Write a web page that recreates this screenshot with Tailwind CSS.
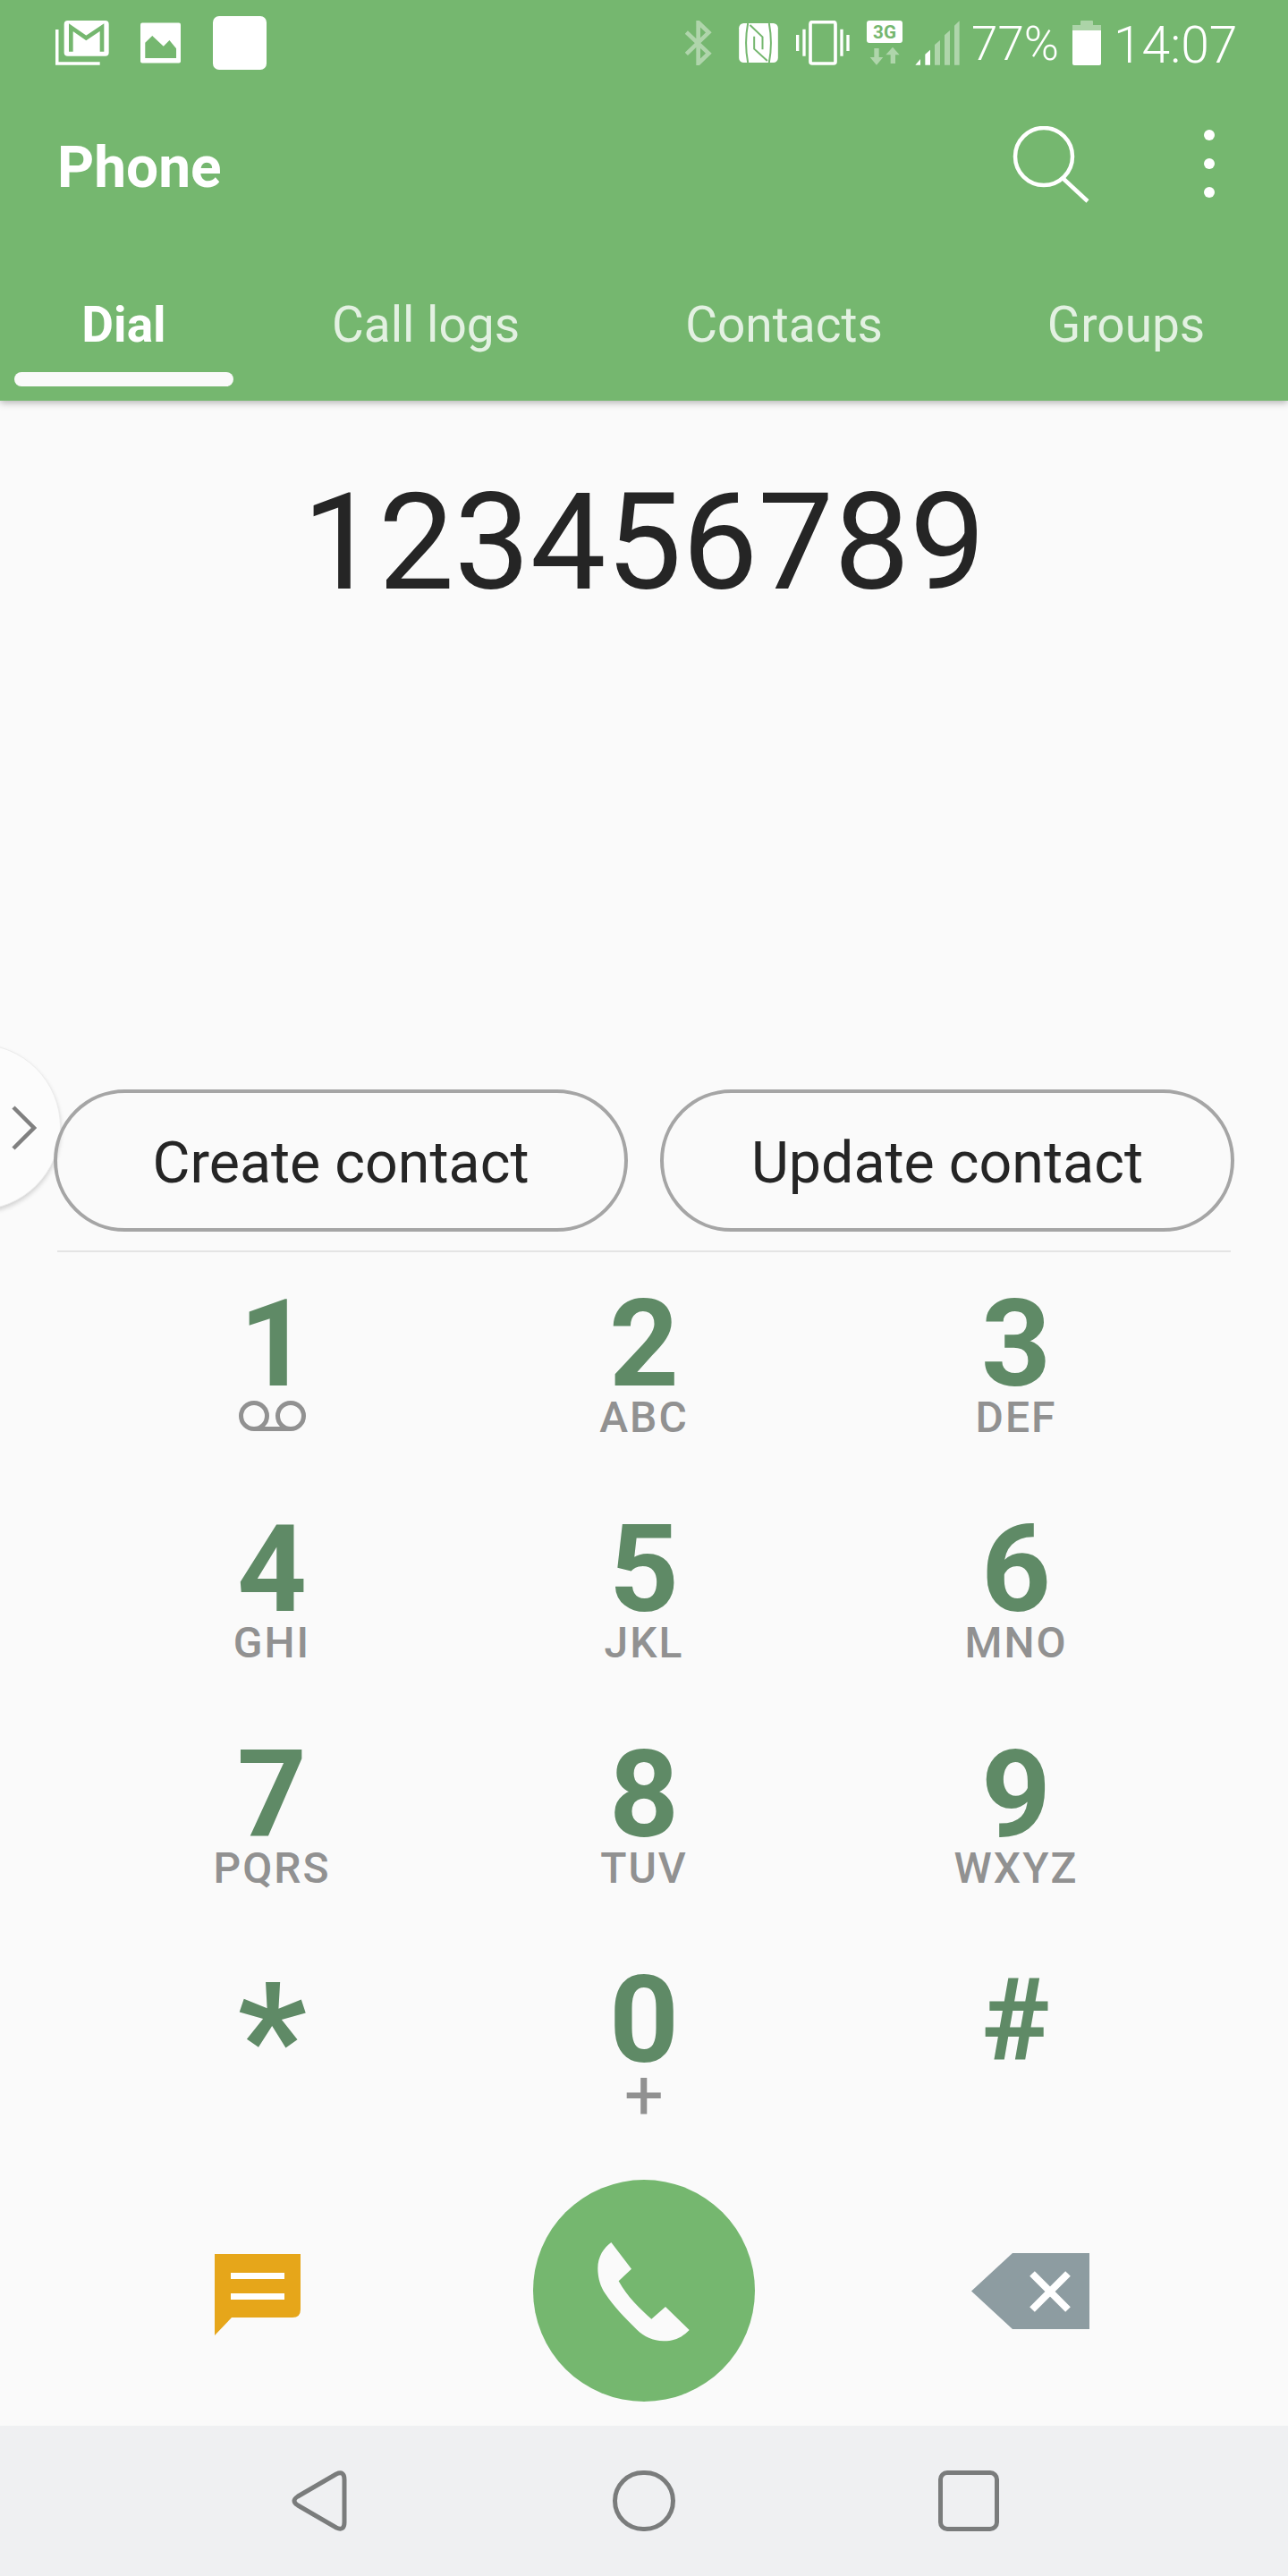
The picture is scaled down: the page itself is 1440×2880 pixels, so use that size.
<!DOCTYPE html>
<html lang="en">
<head>
    <meta charset="UTF-8">
    <title>Phone</title>
    <script src="https://cdn.jsdelivr.net/npm/@tailwindcss/browser@4"></script>
</head>
<body class="bg-[#fafafa] font-['Roboto',sans-serif]">
<div class="relative w-[1440px] h-[2880px] overflow-hidden flex flex-col bg-[#fafafa]">

    <!-- header -->
    <header class="relative z-10 h-[448px] shrink-0 bg-[#75b76f] text-white shadow-[0_2px_8px_rgba(0,0,0,0.3)]">
        <!-- status bar -->
        <div class="h-[96px] flex items-start pl-[62px]">
            <svg class="mt-[23px] w-[60px] h-[50px]" viewBox="37 39 180 150">
                <path d="M42 69V183H186" fill="none" stroke="#fff" stroke-width="11"/>
                <rect x="66" y="39" width="150" height="119" rx="12" fill="#fff"/>
                <path d="M89 143V62L140 97L193 62V143" fill="none" stroke="#75b76f" stroke-width="14"/>
            </svg>
            <svg class="mt-[25px] ml-[35px] w-[45px] h-[46px]" viewBox="322 46 136 136">
                <rect x="322" y="46" width="136" height="136" rx="6" fill="#fff"/>
                <path d="M338 165V113L362 90L400 125L420 105L443 133V165Z" fill="#75b76f"/>
            </svg>
            <div class="mt-[18px] ml-[36px] w-[60px] h-[60px] bg-white rounded-[7px]"></div>

            <svg class="mt-[23px] ml-[468px] w-[30px] h-[50px]" viewBox="34 40 90 150">
                <path d="M38 79L113 150L78 184V46L113 80L38 152" fill="none" stroke="#fff" stroke-opacity="0.42" stroke-width="14"/>
            </svg>
            <svg class="mt-[26px] ml-[30px] w-[44px] h-[44px]" viewBox="213 48 131 132">
                <rect x="213" y="48" width="131" height="132" rx="16" fill="#fff"/>
                <path d="M243 48C235 90 235 138 243 180M314 48C322 90 322 138 314 180" fill="none" stroke="#75b76f" stroke-width="6"/>
                <path d="M250 54L292 94V136M308 174L264 134V92" fill="none" stroke="#75b76f" stroke-width="6"/>
            </svg>
            <svg class="mt-[23px] ml-[20px] w-[60px] h-[50px]" viewBox="405 39 180 150">
                <rect x="453" y="44" width="84" height="139" rx="6" fill="none" stroke="#fff" stroke-width="11"/>
                <path d="M427 68h10v90h-10zM405 87h10v54h-10zM553 68h10v90h-10zM574 87h10v54h-10z" fill="#fff"/>
            </svg>
            <svg class="mt-[23px] ml-[19px] w-[40px] h-[50px]" viewBox="642 39 120 150">
                <rect x="642" y="39" width="120" height="75" rx="9" fill="#fff"/>
                <text x="702" y="99" text-anchor="middle" font-family="Roboto" font-weight="700" font-size="62" fill="#75b76f">3G</text>
                <path d="M667 132h16v30h14l-22 26l-22-26h14zM706 154l23-26l23 26h-14v29h-16v-29z" fill="#fff" fill-opacity="0.42"/>
            </svg>
            <svg class="mt-[23px] ml-[14px] w-[50px] h-[50px]" viewBox="804 39 150 150">
                <path d="M805 188L822 168V188ZM838 152L855 137V188H838Z" fill="#fff"/>
                <path d="M870 120L888 105V188H870ZM903 88L921 72V188H903ZM936 56L953 40V188H936Z" fill="#fff" fill-opacity="0.42"/>
            </svg>
            <span class="ml-[13px] mt-[19px] text-[53px] leading-[60px] font-light">77%</span>
            <div class="ml-[15px] mt-[23px] w-[32px] h-[50px] flex flex-col items-center">
                <div class="w-[14px] h-[5px] bg-white/40 rounded-t-[1px]"></div>
                <div class="w-[32px] h-[6px] bg-white/40"></div>
                <div class="w-[32px] h-[39px] bg-white rounded-b-[2px]"></div>
            </div>
            <span class="ml-[14px] mt-[21px] text-[57px] leading-[60px] font-light">14:07</span>
        </div>

        <!-- title row -->
        <div class="h-[184px] flex items-start pl-[64px]">
            <h1 class="mt-[56px] text-[64px] leading-[72px] font-bold">Phone</h1>
            <svg class="ml-auto mt-[45px] w-[86px] h-[86px]" viewBox="0 0 86 86" fill="none" stroke="#fff" stroke-width="4.5">
                <ellipse cx="35" cy="34" rx="32" ry="32"/>
                <path d="M56 58L84 84"/>
            </svg>
            <svg class="ml-[128px] mr-[82px] mt-[49px] w-[12px] h-[76px]" viewBox="0 0 12 76" fill="#fff">
                <circle cx="6" cy="6" r="6"/><circle cx="6" cy="38" r="6"/><circle cx="6" cy="70" r="6"/>
            </svg>
        </div>

        <!-- tabs -->
        <nav class="flex text-[55px] leading-[64px]">
            <div class="w-[277px] flex flex-col items-center pt-[51px]">
                <span class="font-bold">Dial</span>
                <div class="mt-[21px] w-[245px] h-[16px] rounded-full bg-[#fafafa]"></div>
            </div>
            <div class="w-[398px] pt-[51px] text-center text-white/80">Call logs</div>
            <div class="w-[403px] pt-[51px] text-center text-white/80">Contacts</div>
            <div class="w-[362px] pt-[51px] text-center text-white/80">Groups</div>
        </nav>
    </header>

    <!-- side handle -->
    <div class="absolute left-[-118px] top-[1167px] w-[186px] h-[186px] rounded-full bg-[#fcfcfc] border border-[#ececec] shadow-[0_3px_5px_rgba(0,0,0,0.16)]">
        <svg class="absolute left-[130px] top-[68px] w-[28px] h-[50px]" viewBox="0 0 28 50" fill="none" stroke="#808080" stroke-width="4.5">
            <path d="M2 2L25 25L2 48"/>
        </svg>
    </div>

    <main class="relative flex-1 flex flex-col">
        <div class="h-[770px] pt-[79px] text-center text-[151px] leading-[160px] text-[#252525]">123456789</div>

        <div class="flex gap-[36px] pl-[60px] pr-[60px]">
            <button class="flex-1 h-[159px] pt-[6px] rounded-full border-[4px] border-[#a5a5a5] text-[64.5px] text-[#252525]">Create contact</button>
            <button class="flex-1 h-[159px] pt-[6px] rounded-full border-[4px] border-[#a5a5a5] text-[64.5px] text-[#252525]">Update contact</button>
        </div>
        <div class="mt-[21px] mx-[64px] h-[2px] bg-[#e4e4e4]"></div>

        <!-- keypad -->
        <div class="grid grid-cols-3 grid-rows-[252px_252px_252px_233px] px-[96px] pt-[48px] text-center">
            <div class="flex flex-col items-center"><span class="ml-[5px] text-[136px] leading-[110px] font-bold text-[#5f8a66]">1</span>
                <svg class="mt-[8px] w-[75px] h-[34px]" viewBox="0 0 75 34" fill="none" stroke="#919191" stroke-width="5"><circle cx="17" cy="17" r="14.5"/><circle cx="58" cy="17" r="14.5"/><path d="M17 31.5H58"/></svg></div>
            <div class="flex flex-col items-center"><span class="text-[136px] leading-[110px] font-bold text-[#5f8a66]">2</span><span class="text-[48px] mt-[2px] leading-[50px] font-medium tracking-[2px] text-[#919191]">ABC</span></div>
            <div class="flex flex-col items-center"><span class="text-[136px] leading-[110px] font-bold text-[#5f8a66]">3</span><span class="text-[48px] mt-[2px] leading-[50px] font-medium tracking-[2px] text-[#919191]">DEF</span></div>
            <div class="flex flex-col items-center"><span class="text-[136px] leading-[110px] font-bold text-[#5f8a66]">4</span><span class="text-[48px] mt-[2px] leading-[50px] font-medium tracking-[2px] text-[#919191]">GHI</span></div>
            <div class="flex flex-col items-center"><span class="text-[136px] leading-[110px] font-bold text-[#5f8a66]">5</span><span class="text-[48px] mt-[2px] leading-[50px] font-medium tracking-[2px] text-[#919191]">JKL</span></div>
            <div class="flex flex-col items-center"><span class="text-[136px] leading-[110px] font-bold text-[#5f8a66]">6</span><span class="text-[48px] mt-[2px] leading-[50px] font-medium tracking-[2px] text-[#919191]">MNO</span></div>
            <div class="flex flex-col items-center"><span class="text-[136px] leading-[110px] font-bold text-[#5f8a66]">7</span><span class="text-[48px] mt-[2px] leading-[50px] font-medium tracking-[2px] text-[#919191]">PQRS</span></div>
            <div class="flex flex-col items-center"><span class="text-[136px] leading-[110px] font-bold text-[#5f8a66]">8</span><span class="text-[48px] mt-[2px] leading-[50px] font-medium tracking-[2px] text-[#919191]">TUV</span></div>
            <div class="flex flex-col items-center"><span class="text-[136px] leading-[110px] font-bold text-[#5f8a66]">9</span><span class="text-[48px] mt-[2px] leading-[50px] font-medium tracking-[2px] text-[#919191]">WXYZ</span></div>
            <div class="flex flex-col items-center"><span class="mt-[21px] text-[170px] leading-[110px] font-bold text-[#5f8a66]">*</span></div>
            <div class="flex flex-col items-center"><span class="text-[136px] leading-[110px] font-bold text-[#5f8a66]">0</span><span class="mt-[4px] text-[78px] leading-[50px] text-[#919191]">+</span></div>
            <div class="flex flex-col items-center"><span class="text-[128px] leading-[110px] font-bold text-[#5f8a66]">#</span></div>
        </div>

        <!-- actions -->
        <div class="h-[248px] flex items-center pl-[240px]">
            <svg class="mt-[9px] w-[96px] h-[91px]" viewBox="0 0 96 91">
                <path d="M0 0H96V62Q96 71 87 71H19L0 91Z" fill="#e6a61a"/>
                <path d="M18 21h60v7H18zM18 44h60v7H18z" fill="#fff"/>
            </svg>
            <button class="ml-[260px] w-[248px] h-[248px] rounded-full bg-[#75b76f] flex items-center justify-center">
                <svg class="w-[160px] h-[160px]" viewBox="0 0 480 480">
                    <path d="M130 78L198 167L155 208C185 262 225 300 265 335L312 294L392 372C365 400 335 410 305 409C270 408 240 395 215 370C175 330 140 295 110 250C90 220 85 190 85 165C85 125 105 97 130 78Z" fill="#fafafa"/>
                </svg>
            </button>
            <svg class="ml-[242px] w-[132px] h-[85px]" viewBox="0 0 132 85">
                <path d="M46 0H132V85H46L0 42.5Z" fill="#8d9ca1"/>
                <path d="M68 23L108 63M108 23L68 63" stroke="#fff" stroke-width="8"/>
            </svg>
        </div>
    </main>

    <!-- nav bar -->
    <footer class="h-[168px] shrink-0 bg-[#eff0f2] flex items-start pt-[50px] pl-[326px]">
        <svg class="w-[62px] h-[68px]" viewBox="0 0 62 68" fill="none" stroke="#7a7c7c" stroke-width="5">
            <path d="M50 4L7 29Q-1 34 7 39L50 64Q59 68 59 58V10Q59 0 50 4Z"/>
        </svg>
        <div class="ml-[297px] w-[70px] h-[68px] rounded-full border-[5px] border-[#7a7c7c]"></div>
        <div class="ml-[294px] w-[68px] h-[68px] rounded-[10px] border-[5px] border-[#7a7c7c]"></div>
    </footer>
</div>
</body>
</html>
